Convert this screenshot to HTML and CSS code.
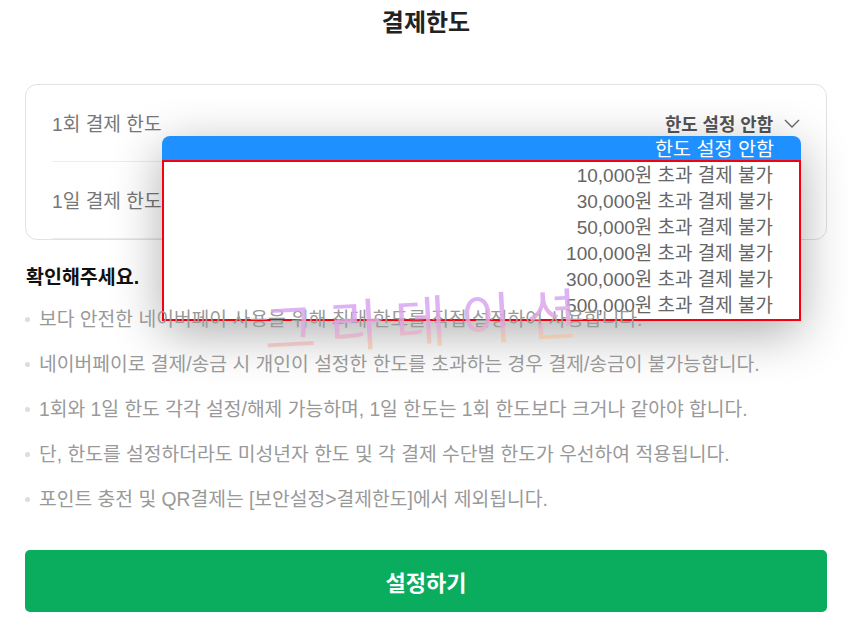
FILE: index.html
```html
<!DOCTYPE html>
<html lang="ko">
<head>
    <meta charset="UTF-8">
    <meta name="viewport" content="width=device-width, initial-scale=1.0">
    <title>결제한도</title>
    <link rel="stylesheet" href="styles.css">
</head>
<body>
    <div class="page">
        <h1 class="title">결제한도</h1>

        <div class="limit-card">
            <div class="limit-row">
                <span class="limit-label">1회 결제 한도</span>
                <span class="limit-value">한도 설정 안함
                    <svg class="chevron" width="16" height="9" viewBox="0 0 16 9"><path d="M1 1l7 7 7-7" fill="none" stroke="#666" stroke-width="1.4"/></svg>
                </span>
            </div>
            <div class="limit-row">
                <span class="limit-label">1일 결제 한도</span>
            </div>

            <div class="dropdown">
                <div class="option selected">한도 설정 안함</div>
                <div class="option-group">
                    <div class="option">10,000원 초과 결제 불가</div>
                    <div class="option">30,000원 초과 결제 불가</div>
                    <div class="option">50,000원 초과 결제 불가</div>
                    <div class="option">100,000원 초과 결제 불가</div>
                    <div class="option">300,000원 초과 결제 불가</div>
                    <div class="option">500,000원 초과 결제 불가</div>
                </div>
            </div>
        </div>

        <h2 class="notice-title">확인해주세요.</h2>
        <ul class="notice-list">
            <li>보다 안전한 네이버페이 사용을 위해 최대 한도를 직접 설정하여 사용합니다.</li>
            <li>네이버페이로 결제/송금 시 개인이 설정한 한도를 초과하는 경우 결제/송금이 불가능합니다.</li>
            <li>1회와 1일 한도 각각 설정/해제 가능하며, 1일 한도는 1회 한도보다 크거나 같아야 합니다.</li>
            <li>단, 한도를 설정하더라도 미성년자 한도 및 각 결제 수단별 한도가 우선하여 적용됩니다.</li>
            <li>포인트 충전 및 QR결제는 [보안설정&gt;결제한도]에서 제외됩니다.</li>
        </ul>

        <button class="submit-btn">설정하기</button>

        <div class="watermark">그라데이션</div>
    </div>
</body>
</html>
```

FILE: styles.css
```css
* {
    box-sizing: border-box;
}
body {
    margin: 0;
    background-color: #fff;
    font-family: "Liberation Sans", "Noto Sans CJK KR", sans-serif;
    color: #666;
}
.page {
    position: relative;
    height: 634px;
    padding: 0 22px 0 25px;
    overflow: hidden;
}
.title {
    margin: 0;
    height: 84px;
    padding-top: 5px;
    font-size: 24px;
    line-height: 35px;
    font-weight: 700;
    color: #222;
    text-align: center;
}
.limit-card {
    position: relative;
    height: 156px;
    padding: 0 26px;
    border: 1px solid #e2e2e2;
    border-radius: 12px;
}
.limit-row {
    display: flex;
    justify-content: space-between;
    align-items: center;
    height: 77px;
    border-bottom: 1px solid #ececec;
}
.limit-row:last-of-type {
    border-bottom: none;
}
.limit-label {
    font-size: 19.2px;
    color: #777;
}
.limit-value {
    display: flex;
    align-items: center;
    gap: 11px;
    font-size: 17.8px;
    font-weight: 700;
    color: #555;
}
.dropdown {
    position: absolute;
    top: 51px;
    left: 136px;
    width: 639px;
    background-color: #fff;
    border-radius: 8px 8px 0 0;
    box-shadow: 0 12px 50px rgba(0, 0, 0, 0.32);
}
.option {
    height: 26px;
    padding-right: 26px;
    font-size: 19px;
    line-height: 26px;
    text-align: right;
    color: #666;
}
.option.selected {
    height: 24px;
    padding-right: 27px;
    font-size: 19.6px;
    line-height: 26px;
    background-color: #1e90ff;
    border-radius: 8px 8px 0 0;
    color: #fff;
}
.option-group {
    height: 161px;
    padding-top: 1px;
    border: 2px solid #f5000f;
}
.notice-title {
    margin: 24px 0 0 1px;
    font-size: 19.5px;
    line-height: 27px;
    font-weight: 700;
    color: #111;
}
.notice-list {
    margin: 15px 0 0;
    padding: 0;
    list-style: none;
}
.notice-list li {
    position: relative;
    height: 45px;
    padding-left: 14px;
    font-size: 19.3px;
    line-height: 27px;
    color: #999;
    white-space: nowrap;
}
.notice-list li::before {
    content: "";
    position: absolute;
    left: 0;
    top: 11px;
    width: 5px;
    height: 5px;
    border-radius: 50%;
    background-color: #ddd;
}
.submit-btn {
    display: block;
    width: 100%;
    height: 62px;
    margin-top: 19px;
    border: none;
    border-radius: 5px;
    background-color: #0aad5e;
    color: #fff;
    font-family: inherit;
    font-size: 22px;
    font-weight: 700;
}
.watermark {
    position: absolute;
    left: 264px;
    top: 288px;
    font-size: 56px;
    line-height: 70px;
    letter-spacing: 14px;
    white-space: nowrap;
    background: linear-gradient(180deg, #d9a6f2 25%, #e0a8d8 55%, #f0d0a0 85%);
    -webkit-background-clip: text;
    background-clip: text;
    color: transparent;
    transform: rotate(-3deg);
    opacity: 0.85;
}
```
